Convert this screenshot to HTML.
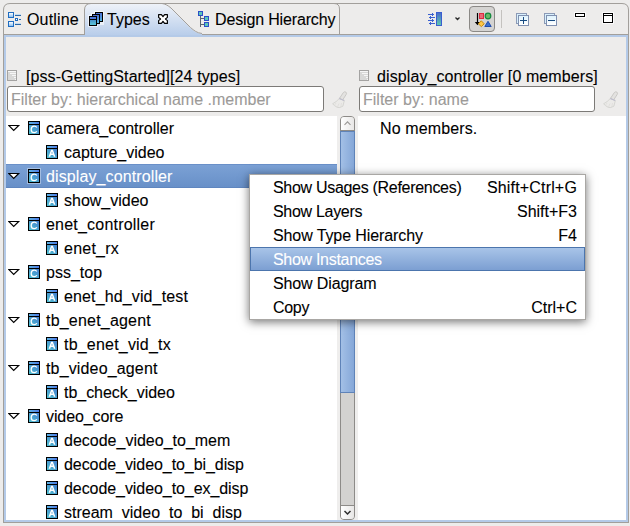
<!DOCTYPE html>
<html><head><meta charset="utf-8">
<style>
html,body{margin:0;padding:0;}
body{width:630px;height:526px;position:relative;overflow:hidden;background:#edeceb;font-family:"Liberation Sans",sans-serif;font-size:16px;color:#000;}
.a{position:absolute;}
.t{position:absolute;white-space:nowrap;line-height:20px;height:20px;-webkit-text-stroke:0.1px currentColor;}
.fbox{position:absolute;height:24px;border:1px solid #7c7a77;border-radius:3px;background:#fff;}
.ph{color:#9c9a98;}
.sel{position:absolute;background:linear-gradient(#7ba1d5,#6890c8);border-top:1px solid #6a90c8;border-bottom:1px solid #5f86bf;box-sizing:border-box;}
.mhl{position:absolute;background:linear-gradient(#a8c4e8,#7c9fd2);border:1px solid #4c75ad;}
.m{letter-spacing:-0.3px;}
.r{right:53px;text-align:right;letter-spacing:0;}
</style></head><body>

<svg width="0" height="0" style="position:absolute">
<defs>
<linearGradient id="gb" x1="0" y1="0" x2="1" y2="0"><stop offset="0" stop-color="#5cb2e2"/><stop offset="1" stop-color="#4d7ae6"/></linearGradient>
<linearGradient id="gm" x1="1" y1="0" x2="0" y2="1"><stop offset="0" stop-color="#447ece"/><stop offset="1" stop-color="#50c2d2"/></linearGradient>
</defs></svg>
<svg class="a" style="left:0;top:0" width="630" height="40">
  <defs>
    <linearGradient id="tg" x1="0" y1="0" x2="0" y2="1">
      <stop offset="0" stop-color="#eef2f9"/>
      <stop offset="1" stop-color="#b5cbe9"/>
    </linearGradient>
  </defs>
  <path d="M3.5,37 L3.5,10 Q3.5,3.5 10,3.5 L622,3.5 Q628.5,3.5 628.5,10 L628.5,37" fill="#edeceb" stroke="#a29f9b" stroke-width="1"/>
  <line x1="3" y1="34.5" x2="629" y2="34.5" stroke="#a29f9b"/>
  <line x1="84.5" y1="9" x2="84.5" y2="34" stroke="#a29f9b"/>
  <path d="M85,37 L85,10 Q85,4 91,4 L162,4 C165,4.3 168,6 171,8.5 L190.5,28 C194,31 197,33.5 202,34 L202,37 Z" fill="url(#tg)"/>
  <path d="M84.5,34 L84.5,10 Q84.5,3.5 91,3.5 L162,3.5 C165,3.8 168,5.5 171,8 L190.5,27.5 C194,30.5 197,33 202,33.5" fill="none" stroke="#a29f9b"/>
  <path d="M339.5,34 L339.5,9 Q339.5,3.5 334,3.5" fill="none" stroke="#a29f9b"/>
</svg>

<!-- view frame -->
<div class="a" style="left:3px;top:34px;width:624px;height:488px;border:1px solid #a29f9b;border-top:none;"></div>
<div class="a" style="left:4px;top:35px;width:620px;height:483px;border:2px solid #b4cae8;"></div>

<!-- left header -->
<svg class="a" style="left:7px;top:70px" width="10" height="11">
<rect x="0.5" y="0.5" width="9" height="10" fill="#d8d8d7" stroke="#a4a3a2"/>
<g shape-rendering="crispEdges" fill="#f6f6f6"><rect x="1" y="1" width="8" height="1"/><rect x="3" y="3" width="6" height="1"/><rect x="5" y="5" width="4" height="1"/><rect x="7" y="7" width="2" height="1"/><rect x="8" y="9" width="1" height="1"/></g>
</svg>
<div class="t" style="left:26px;top:67px;letter-spacing:0.09px">[pss-GettingStarted][24 types]</div>
<div class="fbox" style="left:7px;top:86px;width:315px;"></div>
<div class="t ph" style="left:11px;top:90px;">Filter by: hierarchical name .member</div>
<svg class="a" style="left:327px;top:88px" width="24" height="24">
<path d="M12.6,10.2 L16.3,4.6 Q17.6,3.2 18.9,4.1 Q20,5.1 19.1,6.6 L15.6,12 Z" fill="#e3e2e0" stroke="#c6c5c2" stroke-width="0.9"/>
<path d="M12.2,10.6 L17.3,12.6 L15.9,18.2 Q12.5,20.2 10.3,19.4 Q7.3,17.8 5.6,15.8 Q9.5,13.8 12.2,10.6 Z" fill="#ebeae8" stroke="#d3d2cf" stroke-width="0.9"/>
<path d="M12.2,10.4 L17.2,12.5" stroke="#bcbccc" stroke-width="1.1"/>
<path d="M9,15 L7.5,17 M12,15.5 L10.5,19 M14.5,15 L13.8,19" stroke="#dcdbd8" stroke-width="0.7"/>
</svg>
<!-- right header -->
<svg class="a" style="left:359px;top:70px" width="10" height="11">
<rect x="0.5" y="0.5" width="9" height="10" fill="#d8d8d7" stroke="#a4a3a2"/>
<g shape-rendering="crispEdges" fill="#f6f6f6"><rect x="1" y="1" width="8" height="1"/><rect x="3" y="3" width="6" height="1"/><rect x="5" y="5" width="4" height="1"/><rect x="7" y="7" width="2" height="1"/><rect x="8" y="9" width="1" height="1"/></g>
</svg>
<div class="t" style="left:377px;top:67px;letter-spacing:0.1px">display_controller [0 members]</div>
<div class="fbox" style="left:359px;top:86px;width:234px;"></div>
<div class="t ph" style="left:363px;top:90px;">Filter by: name</div>
<svg class="a" style="left:598px;top:88px" width="24" height="24">
<path d="M12.6,10.2 L16.3,4.6 Q17.6,3.2 18.9,4.1 Q20,5.1 19.1,6.6 L15.6,12 Z" fill="#e3e2e0" stroke="#c6c5c2" stroke-width="0.9"/>
<path d="M12.2,10.6 L17.3,12.6 L15.9,18.2 Q12.5,20.2 10.3,19.4 Q7.3,17.8 5.6,15.8 Q9.5,13.8 12.2,10.6 Z" fill="#ebeae8" stroke="#d3d2cf" stroke-width="0.9"/>
<path d="M12.2,10.4 L17.2,12.5" stroke="#bcbccc" stroke-width="1.1"/>
<path d="M9,15 L7.5,17 M12,15.5 L10.5,19 M14.5,15 L13.8,19" stroke="#dcdbd8" stroke-width="0.7"/>
</svg>

<!-- tree -->
<div class="a" style="left:6px;top:116px;width:331px;height:404px;background:#fff;"></div>
<div class="sel" style="left:6px;top:164px;width:331px;height:24px;"></div>
<div class="a" style="left:0;top:0;width:630px;height:520px;overflow:hidden">
<svg class="a" style="left:8px;top:124px" width="13" height="8"><path d="M0.7,1.5 L10.7,1.5 L5.7,6.5 Z" fill="#fff" stroke="#000" stroke-width="1.15" stroke-linejoin="miter"/></svg>
<svg class="a" style="left:27px;top:120px;overflow:visible" width="14" height="16"><g transform="translate(1,1)">
<rect x="0" y="0" width="12" height="14" fill="#000"/>
<rect x="1" y="1" width="10" height="2" fill="url(#gb)"/>
<rect x="1" y="4" width="10" height="9" fill="url(#gm)"/>
<path d="M8.8,6.5 C8.3,5.6 7.4,5.2 6.2,5.2 C4.3,5.2 3.2,6.7 3.2,8.4 C3.2,10.2 4.3,11.6 6.2,11.6 C7.4,11.6 8.3,11.2 8.8,10.3" fill="none" stroke="#fff" stroke-width="1.3"/></g>
</svg>
<div class="t" style="left:46px;top:119px;color:#000;letter-spacing:0px">camera_controller</div>
<svg class="a" style="left:45px;top:144px;overflow:visible" width="14" height="16"><g transform="translate(1,1)">
<rect x="0" y="0" width="12" height="14" fill="#000"/>
<rect x="1" y="1" width="10" height="2" fill="url(#gb)"/>
<rect x="1" y="4" width="10" height="9" fill="url(#gm)"/>
<path d="M2.6,11.8 L5.1,4.7 L6.9,4.7 L9.4,11.8 L7.8,11.8 L7.2,10 L4.8,10 L4.2,11.8 Z M5.25,8.6 L6.75,8.6 L6,6.4 Z" fill="#fff" fill-rule="evenodd"/></g>
</svg>
<div class="t" style="left:64px;top:143px;color:#000;letter-spacing:0px">capture_video</div>
<svg class="a" style="left:8px;top:172px" width="13" height="8"><path d="M0.7,1.5 L10.7,1.5 L5.7,6.5 Z" fill="#fff" stroke="#000" stroke-width="1.15" stroke-linejoin="miter"/></svg>
<svg class="a" style="left:27px;top:168px;overflow:visible" width="14" height="16"><g transform="translate(1,1)"><rect x="-1" y="-1" width="14" height="16" fill="#fff" opacity="0.35"/>
<rect x="0" y="0" width="12" height="14" fill="#000"/>
<rect x="1" y="1" width="10" height="2" fill="url(#gb)"/>
<rect x="1" y="4" width="10" height="9" fill="url(#gm)"/>
<path d="M8.8,6.5 C8.3,5.6 7.4,5.2 6.2,5.2 C4.3,5.2 3.2,6.7 3.2,8.4 C3.2,10.2 4.3,11.6 6.2,11.6 C7.4,11.6 8.3,11.2 8.8,10.3" fill="none" stroke="#fff" stroke-width="1.3"/></g>
</svg>
<div class="t" style="left:46px;top:167px;color:#fff;letter-spacing:0.11px">display_controller</div>
<svg class="a" style="left:45px;top:192px;overflow:visible" width="14" height="16"><g transform="translate(1,1)">
<rect x="0" y="0" width="12" height="14" fill="#000"/>
<rect x="1" y="1" width="10" height="2" fill="url(#gb)"/>
<rect x="1" y="4" width="10" height="9" fill="url(#gm)"/>
<path d="M2.6,11.8 L5.1,4.7 L6.9,4.7 L9.4,11.8 L7.8,11.8 L7.2,10 L4.8,10 L4.2,11.8 Z M5.25,8.6 L6.75,8.6 L6,6.4 Z" fill="#fff" fill-rule="evenodd"/></g>
</svg>
<div class="t" style="left:64px;top:191px;color:#000;letter-spacing:0px">show_video</div>
<svg class="a" style="left:8px;top:220px" width="13" height="8"><path d="M0.7,1.5 L10.7,1.5 L5.7,6.5 Z" fill="#fff" stroke="#000" stroke-width="1.15" stroke-linejoin="miter"/></svg>
<svg class="a" style="left:27px;top:216px;overflow:visible" width="14" height="16"><g transform="translate(1,1)">
<rect x="0" y="0" width="12" height="14" fill="#000"/>
<rect x="1" y="1" width="10" height="2" fill="url(#gb)"/>
<rect x="1" y="4" width="10" height="9" fill="url(#gm)"/>
<path d="M8.8,6.5 C8.3,5.6 7.4,5.2 6.2,5.2 C4.3,5.2 3.2,6.7 3.2,8.4 C3.2,10.2 4.3,11.6 6.2,11.6 C7.4,11.6 8.3,11.2 8.8,10.3" fill="none" stroke="#fff" stroke-width="1.3"/></g>
</svg>
<div class="t" style="left:46px;top:215px;color:#000;letter-spacing:0.21px">enet_controller</div>
<svg class="a" style="left:45px;top:240px;overflow:visible" width="14" height="16"><g transform="translate(1,1)">
<rect x="0" y="0" width="12" height="14" fill="#000"/>
<rect x="1" y="1" width="10" height="2" fill="url(#gb)"/>
<rect x="1" y="4" width="10" height="9" fill="url(#gm)"/>
<path d="M2.6,11.8 L5.1,4.7 L6.9,4.7 L9.4,11.8 L7.8,11.8 L7.2,10 L4.8,10 L4.2,11.8 Z M5.25,8.6 L6.75,8.6 L6,6.4 Z" fill="#fff" fill-rule="evenodd"/></g>
</svg>
<div class="t" style="left:64px;top:239px;color:#000;letter-spacing:0.23px">enet_rx</div>
<svg class="a" style="left:8px;top:268px" width="13" height="8"><path d="M0.7,1.5 L10.7,1.5 L5.7,6.5 Z" fill="#fff" stroke="#000" stroke-width="1.15" stroke-linejoin="miter"/></svg>
<svg class="a" style="left:27px;top:264px;overflow:visible" width="14" height="16"><g transform="translate(1,1)">
<rect x="0" y="0" width="12" height="14" fill="#000"/>
<rect x="1" y="1" width="10" height="2" fill="url(#gb)"/>
<rect x="1" y="4" width="10" height="9" fill="url(#gm)"/>
<path d="M8.8,6.5 C8.3,5.6 7.4,5.2 6.2,5.2 C4.3,5.2 3.2,6.7 3.2,8.4 C3.2,10.2 4.3,11.6 6.2,11.6 C7.4,11.6 8.3,11.2 8.8,10.3" fill="none" stroke="#fff" stroke-width="1.3"/></g>
</svg>
<div class="t" style="left:46px;top:263px;color:#000;letter-spacing:0px">pss_top</div>
<svg class="a" style="left:45px;top:288px;overflow:visible" width="14" height="16"><g transform="translate(1,1)">
<rect x="0" y="0" width="12" height="14" fill="#000"/>
<rect x="1" y="1" width="10" height="2" fill="url(#gb)"/>
<rect x="1" y="4" width="10" height="9" fill="url(#gm)"/>
<path d="M2.6,11.8 L5.1,4.7 L6.9,4.7 L9.4,11.8 L7.8,11.8 L7.2,10 L4.8,10 L4.2,11.8 Z M5.25,8.6 L6.75,8.6 L6,6.4 Z" fill="#fff" fill-rule="evenodd"/></g>
</svg>
<div class="t" style="left:64px;top:287px;color:#000;letter-spacing:0.13px">enet_hd_vid_test</div>
<svg class="a" style="left:8px;top:316px" width="13" height="8"><path d="M0.7,1.5 L10.7,1.5 L5.7,6.5 Z" fill="#fff" stroke="#000" stroke-width="1.15" stroke-linejoin="miter"/></svg>
<svg class="a" style="left:27px;top:312px;overflow:visible" width="14" height="16"><g transform="translate(1,1)">
<rect x="0" y="0" width="12" height="14" fill="#000"/>
<rect x="1" y="1" width="10" height="2" fill="url(#gb)"/>
<rect x="1" y="4" width="10" height="9" fill="url(#gm)"/>
<path d="M8.8,6.5 C8.3,5.6 7.4,5.2 6.2,5.2 C4.3,5.2 3.2,6.7 3.2,8.4 C3.2,10.2 4.3,11.6 6.2,11.6 C7.4,11.6 8.3,11.2 8.8,10.3" fill="none" stroke="#fff" stroke-width="1.3"/></g>
</svg>
<div class="t" style="left:46px;top:311px;color:#000;letter-spacing:0.2px">tb_enet_agent</div>
<svg class="a" style="left:45px;top:336px;overflow:visible" width="14" height="16"><g transform="translate(1,1)">
<rect x="0" y="0" width="12" height="14" fill="#000"/>
<rect x="1" y="1" width="10" height="2" fill="url(#gb)"/>
<rect x="1" y="4" width="10" height="9" fill="url(#gm)"/>
<path d="M2.6,11.8 L5.1,4.7 L6.9,4.7 L9.4,11.8 L7.8,11.8 L7.2,10 L4.8,10 L4.2,11.8 Z M5.25,8.6 L6.75,8.6 L6,6.4 Z" fill="#fff" fill-rule="evenodd"/></g>
</svg>
<div class="t" style="left:64px;top:335px;color:#000;letter-spacing:0.2px">tb_enet_vid_tx</div>
<svg class="a" style="left:8px;top:364px" width="13" height="8"><path d="M0.7,1.5 L10.7,1.5 L5.7,6.5 Z" fill="#fff" stroke="#000" stroke-width="1.15" stroke-linejoin="miter"/></svg>
<svg class="a" style="left:27px;top:360px;overflow:visible" width="14" height="16"><g transform="translate(1,1)">
<rect x="0" y="0" width="12" height="14" fill="#000"/>
<rect x="1" y="1" width="10" height="2" fill="url(#gb)"/>
<rect x="1" y="4" width="10" height="9" fill="url(#gm)"/>
<path d="M8.8,6.5 C8.3,5.6 7.4,5.2 6.2,5.2 C4.3,5.2 3.2,6.7 3.2,8.4 C3.2,10.2 4.3,11.6 6.2,11.6 C7.4,11.6 8.3,11.2 8.8,10.3" fill="none" stroke="#fff" stroke-width="1.3"/></g>
</svg>
<div class="t" style="left:46px;top:359px;color:#000;letter-spacing:0.15px">tb_video_agent</div>
<svg class="a" style="left:45px;top:384px;overflow:visible" width="14" height="16"><g transform="translate(1,1)">
<rect x="0" y="0" width="12" height="14" fill="#000"/>
<rect x="1" y="1" width="10" height="2" fill="url(#gb)"/>
<rect x="1" y="4" width="10" height="9" fill="url(#gm)"/>
<path d="M2.6,11.8 L5.1,4.7 L6.9,4.7 L9.4,11.8 L7.8,11.8 L7.2,10 L4.8,10 L4.2,11.8 Z M5.25,8.6 L6.75,8.6 L6,6.4 Z" fill="#fff" fill-rule="evenodd"/></g>
</svg>
<div class="t" style="left:64px;top:383px;color:#000;letter-spacing:-0.03px">tb_check_video</div>
<svg class="a" style="left:8px;top:412px" width="13" height="8"><path d="M0.7,1.5 L10.7,1.5 L5.7,6.5 Z" fill="#fff" stroke="#000" stroke-width="1.15" stroke-linejoin="miter"/></svg>
<svg class="a" style="left:27px;top:408px;overflow:visible" width="14" height="16"><g transform="translate(1,1)">
<rect x="0" y="0" width="12" height="14" fill="#000"/>
<rect x="1" y="1" width="10" height="2" fill="url(#gb)"/>
<rect x="1" y="4" width="10" height="9" fill="url(#gm)"/>
<path d="M8.8,6.5 C8.3,5.6 7.4,5.2 6.2,5.2 C4.3,5.2 3.2,6.7 3.2,8.4 C3.2,10.2 4.3,11.6 6.2,11.6 C7.4,11.6 8.3,11.2 8.8,10.3" fill="none" stroke="#fff" stroke-width="1.3"/></g>
</svg>
<div class="t" style="left:46px;top:407px;color:#000;letter-spacing:-0.1px">video_core</div>
<svg class="a" style="left:45px;top:432px;overflow:visible" width="14" height="16"><g transform="translate(1,1)">
<rect x="0" y="0" width="12" height="14" fill="#000"/>
<rect x="1" y="1" width="10" height="2" fill="url(#gb)"/>
<rect x="1" y="4" width="10" height="9" fill="url(#gm)"/>
<path d="M2.6,11.8 L5.1,4.7 L6.9,4.7 L9.4,11.8 L7.8,11.8 L7.2,10 L4.8,10 L4.2,11.8 Z M5.25,8.6 L6.75,8.6 L6,6.4 Z" fill="#fff" fill-rule="evenodd"/></g>
</svg>
<div class="t" style="left:64px;top:431px;color:#000;letter-spacing:0px">decode_video_to_mem</div>
<svg class="a" style="left:45px;top:456px;overflow:visible" width="14" height="16"><g transform="translate(1,1)">
<rect x="0" y="0" width="12" height="14" fill="#000"/>
<rect x="1" y="1" width="10" height="2" fill="url(#gb)"/>
<rect x="1" y="4" width="10" height="9" fill="url(#gm)"/>
<path d="M2.6,11.8 L5.1,4.7 L6.9,4.7 L9.4,11.8 L7.8,11.8 L7.2,10 L4.8,10 L4.2,11.8 Z M5.25,8.6 L6.75,8.6 L6,6.4 Z" fill="#fff" fill-rule="evenodd"/></g>
</svg>
<div class="t" style="left:64px;top:455px;color:#000;letter-spacing:-0.07px">decode_video_to_bi_disp</div>
<svg class="a" style="left:45px;top:480px;overflow:visible" width="14" height="16"><g transform="translate(1,1)">
<rect x="0" y="0" width="12" height="14" fill="#000"/>
<rect x="1" y="1" width="10" height="2" fill="url(#gb)"/>
<rect x="1" y="4" width="10" height="9" fill="url(#gm)"/>
<path d="M2.6,11.8 L5.1,4.7 L6.9,4.7 L9.4,11.8 L7.8,11.8 L7.2,10 L4.8,10 L4.2,11.8 Z M5.25,8.6 L6.75,8.6 L6,6.4 Z" fill="#fff" fill-rule="evenodd"/></g>
</svg>
<div class="t" style="left:64px;top:479px;color:#000;letter-spacing:-0.07px">decode_video_to_ex_disp</div>
<svg class="a" style="left:45px;top:504px;overflow:visible" width="14" height="16"><g transform="translate(1,1)">
<rect x="0" y="0" width="12" height="14" fill="#000"/>
<rect x="1" y="1" width="10" height="2" fill="url(#gb)"/>
<rect x="1" y="4" width="10" height="9" fill="url(#gm)"/>
<path d="M2.6,11.8 L5.1,4.7 L6.9,4.7 L9.4,11.8 L7.8,11.8 L7.2,10 L4.8,10 L4.2,11.8 Z M5.25,8.6 L6.75,8.6 L6,6.4 Z" fill="#fff" fill-rule="evenodd"/></g>
</svg>
<div class="t" style="left:64px;top:503px;color:#000;letter-spacing:0px">stream_video_to_bi_disp</div>
</div>

<!-- scrollbar -->
<div class="a" style="left:337px;top:116px;width:21px;height:404px;background:#efeeed"></div>
<div class="a" style="left:340px;top:116px;width:13px;height:402px;border:1px solid #8d8b88;border-radius:4px;background:#d3d2d0"></div>
<div class="a" style="left:340px;top:131px;width:13px;height:260px;border:1px solid #5f83b8;background:linear-gradient(90deg,#a3c0e6,#85a7d8)"></div>
<div class="a" style="left:341px;top:117px;width:13px;height:13px;border-bottom:1px solid #8d8b88;border-radius:3px 3px 0 0;background:linear-gradient(90deg,#fff,#e8e7e6)"></div>
<div class="a" style="left:341px;top:505px;width:13px;height:13px;border-top:1px solid #8d8b88;border-radius:0 0 3px 3px;background:linear-gradient(90deg,#fff,#e8e7e6)"></div>

<svg class="a" style="left:337px;top:116px" width="21" height="404">
<path d="M7.5,8.8 L10.5,5.8 L13.5,8.8" fill="none" stroke="#9a9896" stroke-width="1.1"/>
<path d="M7.5,395 L10.5,398 L13.5,395" fill="none" stroke="#2e2e2e" stroke-width="1.5"/>
</svg>
<!-- right panel -->
<div class="a" style="left:358px;top:116px;width:268px;height:404px;background:#fff"></div>
<div class="t" style="left:380px;top:119px;letter-spacing:0.12px">No members.</div>

<!-- context menu -->
<div class="a" style="left:249px;top:174px;width:335px;height:144px;background:#fff;border:1px solid #a9a7a4;box-shadow:0 2px 9px rgba(0,0,0,0.55)"></div>
<div class="mhl" style="left:250px;top:247px;width:333px;height:22px;"></div>
<div class="t m" style="left:273px;top:178px;">Show Usages (References)</div>
<div class="t m" style="left:273px;top:202px;">Show Layers</div>
<div class="t m" style="left:273px;top:226px;letter-spacing:-0.1px">Show Type Hierarchy</div>
<div class="t m" style="left:273px;top:250px;color:#fff">Show Instances</div>
<div class="t m" style="left:273px;top:274px;letter-spacing:-0.12px">Show Diagram</div>
<div class="t m" style="left:273px;top:298px;">Copy</div>
<div class="t m r" style="top:178px;letter-spacing:0.17px">Shift+Ctrl+G</div>
<div class="t m r" style="top:202px;">Shift+F3</div>
<div class="t m r" style="top:226px;">F4</div>
<div class="t m r" style="top:298px;">Ctrl+C</div>

<svg class="a" style="left:0;top:0" width="630" height="34" shape-rendering="crispEdges">
<defs>
<linearGradient id="og" x1="0" y1="0" x2="0" y2="1"><stop offset="0" stop-color="#ffffff"/><stop offset="1" stop-color="#8cc0f0"/></linearGradient>
<linearGradient id="tyb" x1="0" y1="0" x2="0" y2="1"><stop offset="0" stop-color="#4a6fd8"/><stop offset="1" stop-color="#58b8e0"/></linearGradient>
<linearGradient id="tyb2" x1="0" y1="0" x2="0" y2="1"><stop offset="0" stop-color="#4a90c8"/><stop offset="1" stop-color="#5ac8d8"/></linearGradient>
<linearGradient id="trg" x1="0" y1="0" x2="0" y2="1"><stop offset="0" stop-color="#4a6ec8"/><stop offset="1" stop-color="#5ec8b0"/></linearGradient>
<linearGradient id="exg" x1="0" y1="0" x2="0" y2="1"><stop offset="0" stop-color="#dff3fd"/><stop offset="1" stop-color="#ffffff"/></linearGradient>
</defs>
<!-- outline -->
<rect x="8" y="12" width="6" height="6" fill="#1f6cc0"/><rect x="9" y="13" width="4" height="4" fill="url(#og)"/>
<rect x="8" y="21" width="6" height="6" fill="#1f6cc0"/><rect x="9" y="22" width="4" height="4" fill="url(#og)"/>
<rect x="15" y="14" width="6" height="1" fill="#c0dcf4"/><rect x="15" y="15" width="6" height="1" fill="#2c68a8"/>
<rect x="15" y="23" width="6" height="1" fill="#c0dcf4"/><rect x="15" y="24" width="6" height="1" fill="#2c68a8"/>
<rect x="15" y="18" width="3" height="3" fill="#1f6cc0"/><rect x="16" y="19" width="1" height="1" fill="#fff"/>
<rect x="19" y="19" width="2" height="1" fill="#2c68a8"/>
<!-- types -->
<g fill="#fff" opacity="0.6"><rect x="94" y="11" width="10" height="12"/><rect x="91" y="13" width="3" height="12"/><rect x="88" y="15" width="3" height="12"/><rect x="91" y="25" width="7" height="2"/><rect x="100" y="23" width="4" height="2"/></g>
<rect x="95" y="12" width="8" height="10" fill="#000"/><rect x="96" y="13" width="6" height="8" fill="url(#tyb)"/>
<rect x="92" y="14" width="8" height="10" fill="#000"/><rect x="93" y="15" width="6" height="8" fill="url(#tyb)"/>
<rect x="89" y="16" width="8" height="10" fill="#000"/><rect x="90" y="17" width="6" height="2" fill="#4c78dc"/><rect x="90" y="20" width="6" height="5" fill="url(#tyb2)"/>
<!-- design hierarchy -->
<rect x="200" y="16" width="1" height="11" fill="#5c6670"/>
<rect x="201" y="18" width="3" height="1" fill="#5c6670"/><rect x="201" y="24" width="3" height="1" fill="#5c6670"/>
<rect x="198" y="11" width="5" height="5" fill="#2c4fc8"/><rect x="199" y="12" width="3" height="3" fill="#5cc8b8"/>
<rect x="204" y="16" width="5" height="5" fill="#2c4fc8"/><rect x="205" y="17" width="3" height="3" fill="#5cc8b8"/>
<rect x="204" y="22" width="5" height="5" fill="#2c4fc8"/><rect x="205" y="23" width="3" height="3" fill="#5cc8b8"/>
<!-- toolbar icon 1 -->
<rect x="436" y="12" width="6" height="14" fill="#3a5ed0"/><rect x="437" y="13" width="4" height="12" fill="url(#trg)"/>
<rect x="428" y="14" width="6" height="1" fill="#3a60d0"/><rect x="432" y="13" width="1" height="3" fill="#3a60d0"/>
<rect x="429" y="17" width="6" height="1" fill="#3a60d0"/><rect x="430" y="16" width="1" height="3" fill="#3a60d0"/>
<rect x="428" y="20" width="6" height="1" fill="#3a60d0"/><rect x="432" y="19" width="1" height="3" fill="#3a60d0"/>
<rect x="429" y="23" width="6" height="1" fill="#3a60d0"/><rect x="430" y="22" width="1" height="3" fill="#3a60d0"/>
<!-- separator -->
<rect x="501" y="10" width="1" height="18" fill="#c4c2bf"/>
<!-- expand all -->
<rect x="516" y="13" width="11" height="11" fill="#8c9ab6"/><rect x="517" y="14" width="9" height="9" fill="#d8f0fc"/>
<rect x="518" y="15" width="11" height="11" fill="#8090b0"/><rect x="519" y="16" width="9" height="9" fill="url(#exg)"/>
<rect x="520" y="20" width="7" height="1" fill="#174a80"/><rect x="523" y="17" width="1" height="7" fill="#174a80"/>
<!-- collapse all -->
<rect x="544" y="13" width="11" height="11" fill="#8c9ab6"/><rect x="545" y="14" width="9" height="9" fill="#d8f0fc"/>
<rect x="546" y="15" width="11" height="11" fill="#8090b0"/><rect x="547" y="16" width="9" height="9" fill="url(#exg)"/>
<rect x="548" y="20" width="7" height="1" fill="#174a80"/>
<!-- minimize -->
<rect x="574" y="12" width="12" height="6" fill="#fff" opacity="0.8"/>
<rect x="575" y="13" width="10" height="4" fill="#000"/><rect x="576" y="14" width="8" height="2" fill="#fff"/>
<!-- maximize -->
<rect x="602" y="12" width="12" height="12" fill="#fff" opacity="0.8"/>
<rect x="603" y="13" width="10" height="10" fill="#000"/><rect x="604" y="14" width="8" height="1" fill="#fff"/><rect x="604" y="16" width="8" height="6" fill="#fff"/>
</svg>
<svg class="a" style="left:0;top:0" width="630" height="34">
<!-- close X -->
<path d="M158.6,14.6 L161.4,14.6 L163,16.7 L164.6,14.6 L167.4,14.6 L167.4,17.4 L165.4,19 L167.4,20.6 L167.4,23.4 L164.6,23.4 L163,21.3 L161.4,23.4 L158.6,23.4 L158.6,20.6 L160.6,19 L158.6,17.4 Z" fill="#fff" stroke="#000" stroke-width="1.15" stroke-linejoin="round"/>
<!-- chevron -->
<path d="M455.5,17.5 L457.5,19.5 L459.5,17.5" fill="none" stroke="#2a2a2a" stroke-width="1.3"/>
<!-- toggle button -->
<rect x="469.5" y="6.5" width="25" height="25" rx="3.5" fill="#d5d4d2" stroke="#8b8986"/>
<path d="M477.5,13 L477.5,23" stroke="#000" stroke-width="1.2"/>
<path d="M474.8,22 L480.2,22 L477.5,25.2 Z" fill="#000"/>
<rect x="479.5" y="13.5" width="4" height="5" fill="#e86878" stroke="#dc2c40"/>
<circle cx="488" cy="16" r="2.8" fill="#68b868" stroke="#138a3c" stroke-width="1.2"/>
<path d="M481.3,20.8 L484.2,23.8 L481.3,26.6 L478.4,23.8 Z" fill="#ffc848" stroke="#c88a08"/>
<path d="M488,21.3 L491.2,26.5 L484.8,26.5 Z" fill="#3a70d0" stroke="#1e4cae"/>
</svg>
<!-- tab labels -->
<div class="t" style="left:27px;top:10px;letter-spacing:0.15px">Outline</div>
<div class="t" style="left:107px;top:10px;">Types</div>
<div class="t" style="left:215px;top:10px;letter-spacing:-0.15px">Design Hierarchy</div>

</body></html>
